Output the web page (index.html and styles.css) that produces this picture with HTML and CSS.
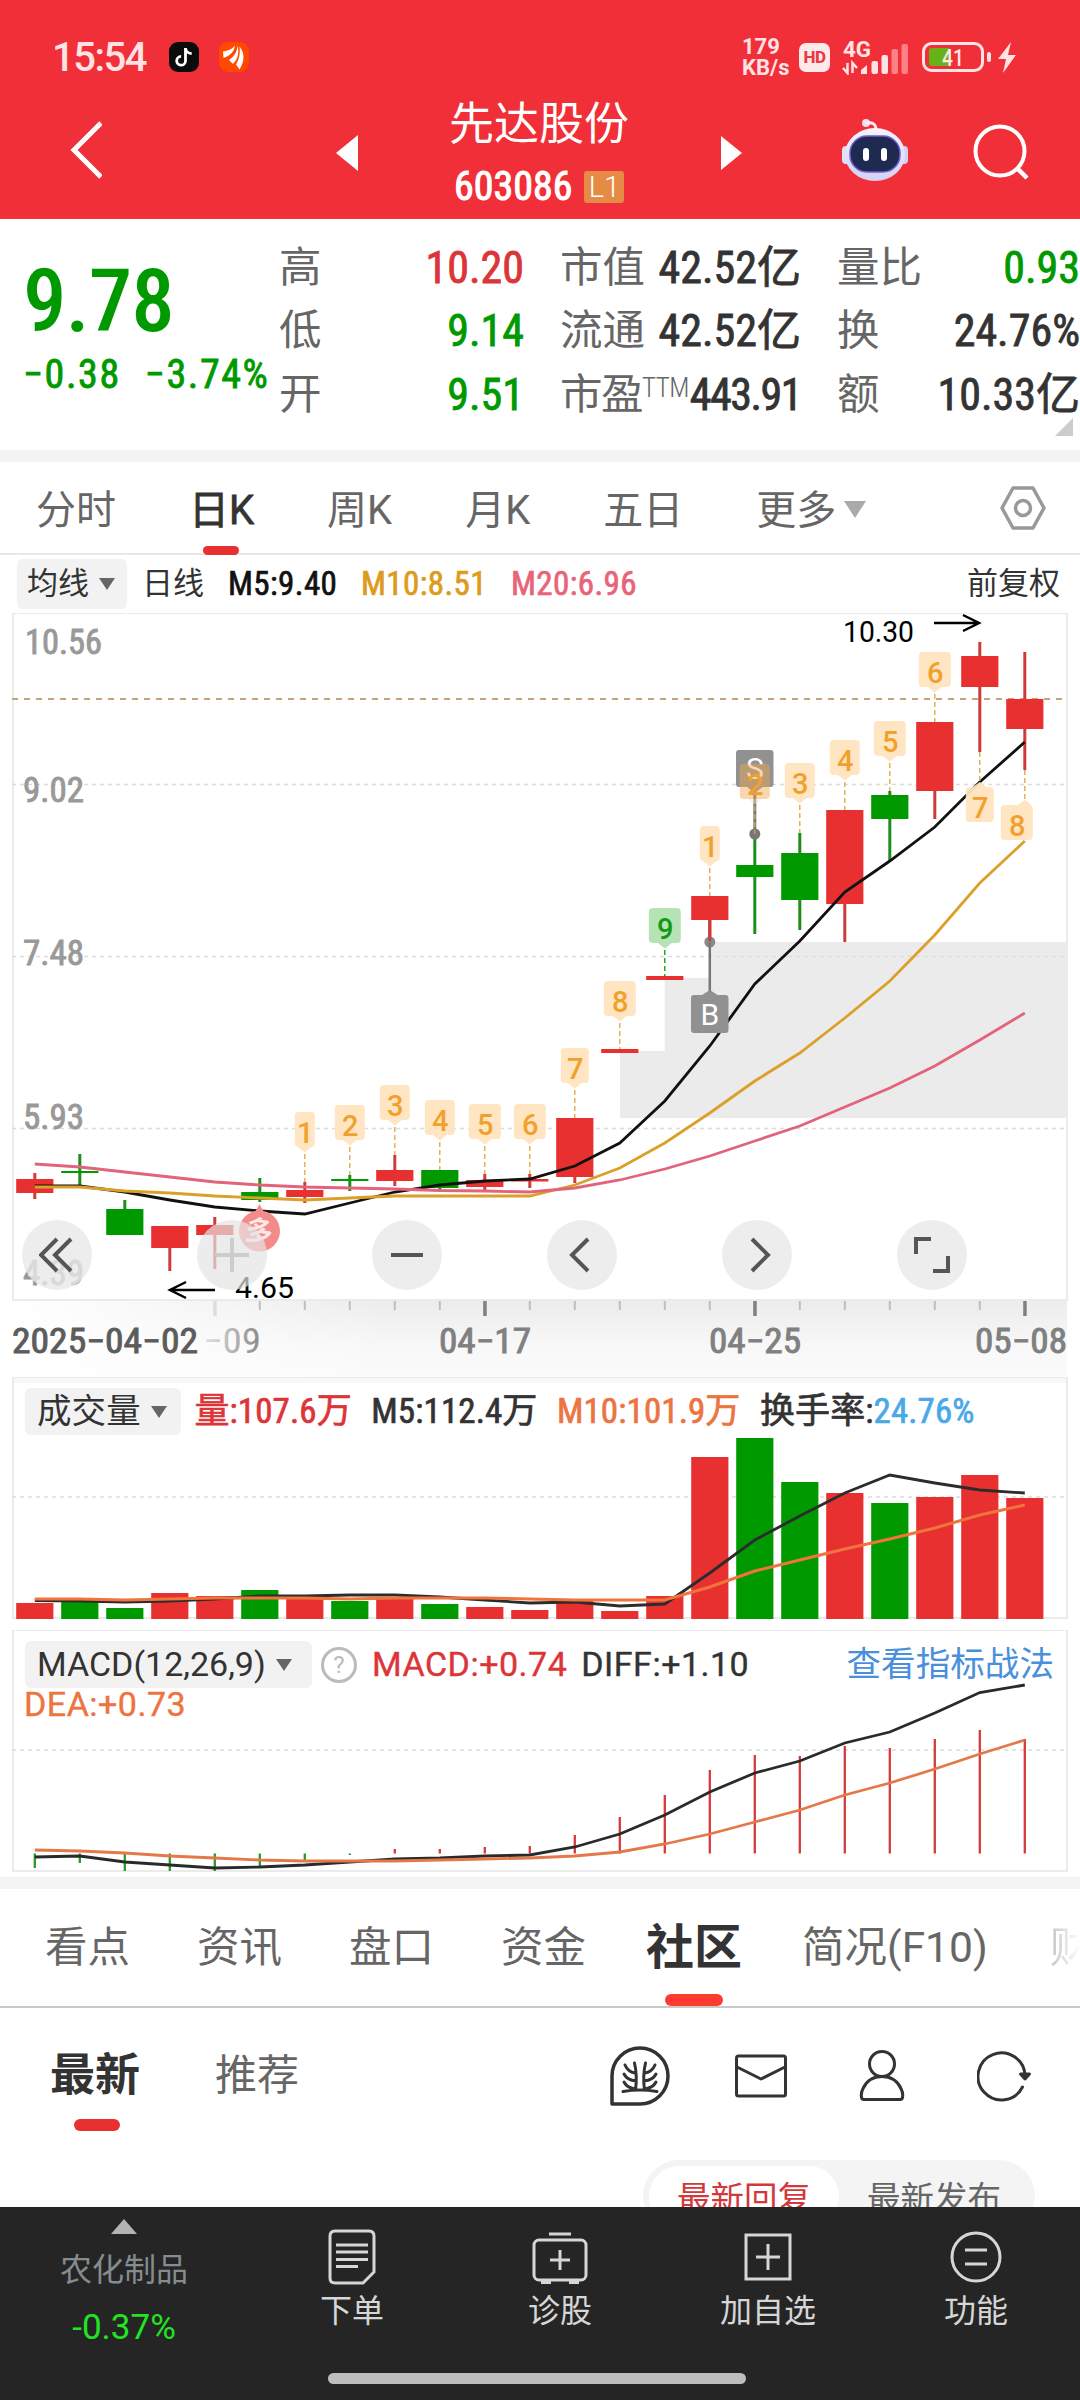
FILE: index.html
```html
<!DOCTYPE html>
<html lang="zh-CN">
<head>
    <meta charset="utf-8">
    <title>先达股份 603086</title>
    <link rel="stylesheet" href="styles.css">
</head>
<body>
    <header class="top">
        <div class="status">
            <span class="clock">15:54</span>
            <svg class="app-icon" width="30" height="30" viewBox="0 0 30 30">
                <rect width="30" height="30" rx="9" fill="#0b0b0b"/>
                <path d="M16.5 6v13a4.4 4.4 0 1 1-4.4-4.6" fill="none" stroke="#fff" stroke-width="2.8"/>
                <path d="M16.5 6c.3 3.6 2.5 5.4 6.2 5.6" fill="none" stroke="#fff" stroke-width="2.8"/>
            </svg>
            <svg class="app-icon" width="30" height="30" viewBox="0 0 30 30">
                <rect width="30" height="30" rx="9" fill="#ff4800"/>
                <path d="M4 9.500q8-1 12-6q-1 9-11.500 12.500z" fill="#fff"/>
                <path d="M10 18q8-5 8.500-14.500q3 11-4.500 18.500z" fill="#fff"/>
                <path d="M17 22.500q5-8 3.500-18q8 10 0 23z" fill="#fff"/>
            </svg>
            <div class="speed">179<br>KB/s</div>
            <div class="hd">HD</div>
            <svg class="signal" width="68" height="36" viewBox="842 38 68 36">
                <text x="843" y="56" font-size="22" font-weight="700" fill="#ffe3e4" textLength="28" lengthAdjust="spacingAndGlyphs">4G</text>
                <path d="M843 67l4.500 5V62M852.500 72V62l4.500 5" stroke="#ffe3e4" stroke-width="2.500" fill="none"/>
                <path d="M861 73v-4l6-5v9z" fill="#ffe3e4"/>
                <rect x="871.5" y="60" width="6.5" height="13" rx="2" fill="#ffe3e4"/>
                <rect x="881.5" y="54" width="6.5" height="19" rx="2" fill="#ffe3e4"/>
                <rect x="891.5" y="48" width="6.5" height="25" rx="2" fill="#ff8087"/>
                <rect x="901.5" y="43" width="6.5" height="30" rx="2" fill="#ff8087"/>
            </svg>
            <svg class="battery" width="98" height="34" viewBox="920 40 98 34">
                <rect x="923.5" y="43.5" width="59" height="27" rx="8" fill="none" stroke="#ffe3e4" stroke-width="3"/>
                <rect x="929" y="48" width="22" height="18" rx="3" fill="#67b317"/>
                <rect x="987" y="52" width="4" height="10" rx="2" fill="#ffe3e4"/>
                <text x="942" y="66" font-size="24" font-weight="500" fill="#ffe9ea" textLength="22" lengthAdjust="spacingAndGlyphs">41</text>
                <path d="M1011 42l-13 17h8l-3 14 13-18h-8l3-13z" fill="#ffe3e4"/>
            </svg>
        </div>
        <nav class="nav">
            <svg class="back" width="32" height="60" viewBox="0 0 32 60">
                <path d="M31 3L4 30L31 57" fill="none" stroke="#fff" stroke-width="5"/>
            </svg>
            <svg class="prev" width="22" height="36" viewBox="0 0 22 36"><path d="M22 0v36L0 18z" fill="#fff"/></svg>
            <div class="stock">
                <div class="stock-name">先达股份</div>
                <div class="stock-code">603086<span class="level">L1</span></div>
            </div>
            <svg class="next" width="21" height="34" viewBox="0 0 21 34"><path d="M0 0v34l21-17z" fill="#fff"/></svg>
            <svg class="robot" width="66" height="62" viewBox="0 0 66 62">
                <defs>
                    <linearGradient id="shell" x2="0" y2="1">
                        <stop offset="0" stop-color="#f8f4fb"/>
                        <stop offset="1" stop-color="#d3d0f4"/>
                    </linearGradient>
                </defs>
                <circle cx="24" cy="4" r="4" fill="#f3dfee"/>
                <path d="M24 4c7-1 10 1 10 7" fill="none" stroke="#ffe9f2" stroke-width="3"/>
                <rect x="0" y="27" width="9" height="18" rx="4" fill="#dfe0fb"/>
                <rect x="57" y="27" width="9" height="18" rx="4" fill="#cfd2f8"/>
                <ellipse cx="33" cy="35.5" rx="30" ry="26.5" fill="url(#shell)"/>
                <rect x="8" y="17" width="50" height="36" rx="17" fill="#1e2a50" stroke="#6f5fd0" stroke-width="1.5"/>
                <rect x="21" y="29" width="6" height="13" rx="3" fill="#fff"/>
                <rect x="39" y="29" width="6" height="13" rx="3" fill="#fff"/>
            </svg>
            <svg class="search" width="56" height="56" viewBox="0 0 56 56">
                <circle cx="27" cy="27" r="24.5" fill="none" stroke="#fff" stroke-width="4"/>
                <path d="M44 44l10 10" stroke="#fff" stroke-width="4.5"/>
            </svg>
        </nav>
    </header>

    <section class="quote">
        <div class="price">
            <div class="last">9.78</div>
            <div class="change"><span>−0.38</span><span>−3.74%</span></div>
        </div>
        <div class="stats">
            <div class="stat"><span>高</span><b class="up">10.20</b></div>
            <div class="stat"><span>市值</span><b>42.52亿</b></div>
            <div class="stat"><span>量比</span><b class="down">0.93</b></div>
            <div class="stat"><span>低</span><b class="down">9.14</b></div>
            <div class="stat"><span>流通</span><b>42.52亿</b></div>
            <div class="stat"><span>换</span><b>24.76%</b></div>
            <div class="stat"><span>开</span><b class="down">9.51</b></div>
            <div class="stat"><span class="tight">市盈<sup>TTM</sup></span><b class="tight">443.91</b></div>
            <div class="stat"><span>额</span><b>10.33亿</b></div>
        </div>
        <i class="corner"></i>
    </section>

    <div class="periods">
        <span>分时</span>
        <span class="active">日K</span>
        <span>周K</span>
        <span>月K</span>
        <span>五日</span>
        <span>更多<i class="caret light"></i></span>
        <svg class="gear" width="46" height="44" viewBox="0 0 46 44">
            <path d="M13 2h20l11 20-11 20H13L2 22z" fill="none" stroke="#999" stroke-width="3.5" stroke-linejoin="round"/>
            <circle cx="23" cy="22" r="7.5" fill="none" stroke="#999" stroke-width="3.5"/>
        </svg>
    </div>

    <div class="legend">
        <span class="pill">均线<i class="caret"></i></span>
        <span class="kind">日线</span>
        <span class="ma5">M5:9.40</span>
        <span class="ma10">M10:8.51</span>
        <span class="ma20">M20:6.96</span>
        <span class="adjust">前复权</span>
    </div>

    <section class="kline">
        <svg id="kline" width="1080" height="764" viewBox="0 613 1080 764"></svg>
        <div class="tools">
            <button class="tool"><svg width="36" height="38" viewBox="0 0 36 38"><path d="M18 3L2 19l16 16M32 3L16 19l16 16"/></svg></button>
            <button class="tool off"><svg width="36" height="38" viewBox="0 0 36 38"><path d="M18 2v34M1 19h34"/></svg></button>
            <button class="tool"><svg width="36" height="38" viewBox="0 0 36 38"><path d="M2 19h32"/></svg></button>
            <button class="tool"><svg width="36" height="38" viewBox="0 0 36 38"><path d="M24 3L8 19l16 16"/></svg></button>
            <button class="tool"><svg width="36" height="38" viewBox="0 0 36 38"><path d="M13 3l16 16-16 16"/></svg></button>
            <button class="tool"><svg width="36" height="38" viewBox="0 0 36 38"><path d="M2 18V3h15M34 20v15H19"/></svg></button>
        </div>
    </section>

    <section class="panel">
        <div class="panel-head volume-head">
            <span class="pill">成交量<i class="caret"></i></span>
            <span class="up">量:107.6万</span>
            <span>M5:112.4万</span>
            <span class="orange">M10:101.9万</span>
            <span>换手率:<em>24.76%</em></span>
        </div>
        <svg id="volume" width="1080" height="253" viewBox="0 1377 1080 253"></svg>
    </section>

    <section class="panel">
        <div class="panel-head macd-head">
            <span class="pill">MACD(12,26,9)<i class="caret"></i></span>
            <span class="help">?</span>
            <span class="up">MACD:+0.74</span>
            <span class="diff">DIFF:+1.10</span>
            <a class="guide">查看指标战法</a>
        </div>
        <div class="dea">DEA:+0.73</div>
        <svg id="macd" width="1080" height="247" viewBox="0 1630 1080 247"></svg>
    </section>

    <div class="tabs">
        <span>看点</span>
        <span>资讯</span>
        <span>盘口</span>
        <span>资金</span>
        <span class="active">社区</span>
        <span>简况(F10)</span>
        <span class="faded">财</span>
    </div>

    <section class="community">
        <div class="feed-tabs">
            <span class="active">最新</span>
            <span>推荐</span>
            <div class="feed-icons">
                <svg width="60" height="60" viewBox="0 0 60 60">
                    <path d="M2 58V30A28 28 0 1 1 30 58z" stroke-width="3.5"/>
                    <path d="M13 45.500q17-3 34 0M25.500 44q2-14-1-27M34.500 44q-2-14 1-27M25 27q-7-1-10-8M26 35q-9-1-12-7M26 43q-9-1-12-7M35 27q7-1 10-8M34 35q9-1 12-7M34 43q9-1 12-7"/>
                </svg>
                <svg width="52" height="44" viewBox="0 0 52 44">
                    <rect x="1.5" y="2" width="49" height="40" rx="2"/>
                    <path d="M2 13l24 12L50 13"/>
                </svg>
                <svg width="46" height="52" viewBox="0 0 46 52">
                    <circle cx="23" cy="14" r="12.5"/>
                    <path d="M5 49.500c-4 0-3-7-1-11C8 30 15 26.500 23 26.500S38 30 42 38.500c2 4 3 11-1 11z"/>
                </svg>
                <svg width="54" height="52" viewBox="0 0 54 52">
                    <path d="M48 26A23.500 23.500 0 1 0 45.500 37"/>
                    <path d="M43.500 24h9L48 29z" class="solid"/>
                </svg>
            </div>
        </div>
        <div class="sort">
            <span class="chosen">最新回复</span>
            <span>最新发布</span>
        </div>
    </section>

    <footer class="bottom">
        <div class="sector">
            <i class="caret-up"></i>
            <span>农化制品</span>
            <b>-0.37%</b>
        </div>
        <div class="action">
            <svg width="48" height="56" viewBox="0 0 48 56">
                <path d="M7 2h34q5 0 5 5v36L35 54H7q-5 0-5-5V7q0-5 5-5zM8 16h32M8 23h32M8 30.500h32M8 37.500h22"/>
            </svg>
            <span>下单</span>
        </div>
        <div class="action">
            <svg width="56" height="56" viewBox="0 0 56 56">
                <rect x="2" y="11" width="52" height="40" rx="5"/>
                <path d="M17 5h22M28 21v20M18 31h20M9 53.500h10M37 53.500h10"/>
            </svg>
            <span>诊股</span>
        </div>
        <div class="action">
            <svg width="48" height="56" viewBox="0 0 48 56">
                <rect x="2" y="6" width="44" height="44"/>
                <path d="M24 15v26M12 28h24"/>
            </svg>
            <span>加自选</span>
        </div>
        <div class="action">
            <svg width="52" height="56" viewBox="0 0 52 56">
                <circle cx="26" cy="28" r="24"/>
                <path d="M15 21h22M15 35h22"/>
            </svg>
            <span>功能</span>
        </div>
        <i class="home"></i>
    </footer>

    <script src="charts.js"></script>
</body>
</html>
```
FILE: styles.css
```css
body {
    margin: 0;
    width: 1080px;
    height: 2400px;
    overflow: hidden;
    position: relative;
    background: #fff;
    color: #333;
    font-family: "Roboto", "Noto Sans CJK SC", sans-serif;
}

i, em {
    font-style: normal;
}

.up { color: #dc3538 !important; }
.down { color: #090 !important; }
.orange { color: #ec7440; }

/* header */
.top {
    height: 219px;
    background: #f12f38;
    color: #fff;
}

.status {
    display: flex;
    align-items: center;
    height: 90px;
    padding: 24px 62px 0 52px;
    box-sizing: border-box;
}

.clock {
    width: 96px;
    font-size: 40px;
    font-weight: 500;
    letter-spacing: -1.5px;
    white-space: nowrap;
    color: #ffe3e4;
}

.app-icon {
    margin-left: 21px;
}

.app-icon + .app-icon {
    margin-left: 20px;
}

.speed {
    margin-left: auto;
    width: 50px;
    font-size: 22px;
    font-weight: 700;
    line-height: 21px;
    color: #ffe3e4;
}

.hd {
    width: 31px;
    height: 29px;
    margin: 0 12px 0 7px;
    border-radius: 7px;
    background: #ffe9ea;
    color: #e83a42;
    font-size: 17px;
    font-weight: 800;
    line-height: 29px;
    letter-spacing: -0.5px;
    text-align: center;
}

.battery {
    margin-left: 10px;
}

.nav {
    display: flex;
    align-items: center;
    height: 120px;
    padding-left: 70px;
}

.prev { margin: 6px 91px 0 234px; }
.next { margin: 6px 100px 0 92px; }
.search { margin: 4px 0 0 65px; }

.stock {
    width: 180px;
    padding-top: 3px;
}

.stock-name {
    font-size: 45px;
    line-height: 50px;
    white-space: nowrap;
}

.stock-code {
    display: flex;
    align-items: center;
    margin-top: 20px;
    padding-left: 5px;
    font: 400 40px/34px "Roboto Condensed", Roboto, sans-serif;
    -webkit-text-stroke: 1px currentColor;
}

.level {
    width: 40px;
    height: 32px;
    margin-left: 12px;
    border-radius: 3px;
    background: #e58b45;
    font: 300 29px/33px Roboto, sans-serif;
    text-align: center;
    -webkit-text-stroke: 0;
}

/* quote */
.quote {
    display: flex;
    position: relative;
    height: 231px;
    border-bottom: 12px solid #f4f4f4;
}

.price {
    width: 256px;
    padding: 38px 0 0 23px;
    color: #090;
    font-family: "Roboto Condensed", Roboto, sans-serif;
    white-space: nowrap;
}

.last {
    font-size: 87px;
    font-weight: 540;
    line-height: 88px;
    letter-spacing: -1px;
}

.change {
    display: flex;
    gap: 24px;
    margin-top: 8px;
    font-size: 40px;
    line-height: 44px;
    letter-spacing: 1.6px;
    -webkit-text-stroke: 0.8px currentColor;
}

.stats {
    display: grid;
    grid-template-columns: 245px 241px 243px;
    grid-template-rows: repeat(3, 63.5px);
    column-gap: 36px;
    height: 190px;
    padding-top: 17px;
}

.stat {
    display: flex;
    justify-content: space-between;
    align-items: center;
    font-size: 42.5px;
    line-height: 60px;
    color: #666;
    white-space: nowrap;
}

.stat sup {
    font: 300 27px/1 "Roboto Condensed", Roboto, sans-serif;
    letter-spacing: -0.5px;
    vertical-align: 12px;
}

.stat b {
    color: #333;
    font: 400 44px/60px "Roboto Condensed", "Noto Sans CJK SC", sans-serif;
    -webkit-text-stroke: 0.8px currentColor;
}

.stat .tight {
    letter-spacing: -1.5px;
}

.corner {
    position: absolute;
    right: 7px;
    bottom: 14px;
    border: 9px solid;
    border-color: transparent #ccc #ccc transparent;
}

/* period tabs */
.periods {
    display: flex;
    align-items: center;
    gap: 73px;
    height: 93px;
    padding: 0 34px 2px 36px;
    border-bottom: 2px solid #e8e8e8;
    font-size: 40px;
    color: #666;
    box-sizing: border-box;
}

.periods span,
.tabs span,
.feed-tabs span {
    position: relative;
    white-space: nowrap;
}

.periods .active {
    color: #333;
    -webkit-text-stroke: 0.8px currentColor;
}

.active::after {
    content: "";
    position: absolute;
    left: 50%;
    bottom: -19px;
    width: 36px;
    height: 9px;
    margin-left: -19px;
    border-radius: 5px;
    background: #e83030;
}

.gear {
    margin: 2px 0 0 auto;
}

.caret {
    display: inline-block;
    margin-left: 10px;
    border: 8px solid transparent;
    border-top: 12px solid #666;
    border-bottom: 0;
    vertical-align: 5px;
}

.caret.light {
    margin-left: 8px;
    border-width: 17px 11px 0;
    border-top-color: #aaa;
    vertical-align: 6px;
}

.pill {
    display: flex;
    align-items: center;
    border-radius: 6px;
    background: #f2f2f2;
    box-sizing: border-box;
    color: #333;
    white-space: nowrap;
}

/* moving average legend */
.legend {
    display: flex;
    align-items: center;
    height: 58px;
    padding: 0 20px 0 17px;
    font: 31px/50px "Roboto Condensed", "Noto Sans CJK SC", sans-serif;
    white-space: nowrap;
    box-sizing: border-box;
}

.legend .pill {
    width: 110px;
    height: 50px;
    padding-left: 10px;
}

.legend .kind { margin-left: 15px; width: 86px; }
.ma5 { width: 133px; color: #111; }
.ma10 { width: 150px; color: #dd9b1c; }
.ma20 { color: #e8647a; }

.ma5, .ma10, .ma20 {
    font-size: 33px;
    letter-spacing: 0.4px;
    -webkit-text-stroke: 0.7px currentColor;
}

.adjust { margin-left: auto; }

/* k-line */
.kline {
    position: relative;
    height: 764px;
}

.kline svg,
.panel svg {
    display: block;
}

.tools {
    position: absolute;
    left: 22px;
    top: 607px;
    display: flex;
    gap: 105px;
}

.tool {
    display: flex;
    justify-content: center;
    align-items: center;
    width: 70px;
    height: 70px;
    padding: 0;
    border: 0;
    border-radius: 50%;
    background: rgba(232, 232, 232, .8);
}

.tool path {
    fill: none;
    stroke: #555;
    stroke-width: 4;
}

.tool.off {
    background: rgba(228, 228, 228, .7);
}

.tool.off path {
    stroke: #ccc;
}

.date-axis text,
.price-axis text {
    font: 400 35px "Roboto Condensed", Roboto, sans-serif;
    fill: #999;
    stroke: #999;
    stroke-width: 0.9;
}

.date-axis text {
    fill: #808080;
    stroke: #808080;
}

.date-axis .first {
    fill: #5c5c5c;
    stroke: #5c5c5c;
}

.date-axis .fading {
    fill: url(#fade);
    stroke: none;
}

.tag text {
    font: 500 29px Roboto, sans-serif;
    text-anchor: middle;
}

.mark text {
    font: 400 30px Roboto, sans-serif;
    fill: #fff;
    text-anchor: middle;
}

.extreme {
    font: 400 30px Roboto, sans-serif;
    fill: #000;
}

/* indicator panels */
.panel {
    position: relative;
}

.panel-head {
    position: absolute;
    left: 25px;
    right: 26px;
    top: 11px;
    display: flex;
    align-items: center;
    height: 47px;
    font-size: 34px;
    line-height: 47px;
    white-space: nowrap;
}

.panel-head .pill {
    height: 47px;
    padding-left: 12px;
    -webkit-text-stroke: 0;
}

.volume-head {
    font-family: "Roboto Condensed", "Noto Sans CJK SC", sans-serif;
    font-size: 35px;
    letter-spacing: 0.1px;
    gap: 19.5px;
    -webkit-text-stroke: 0.7px currentColor;
}

.volume-head .pill {
    width: 156px;
    margin-right: -6px;
    font-size: 34.5px;
}

.volume-head em {
    color: #4aa8e8;
}

.macd-head .pill {
    width: 287px;
}

.help {
    width: 30px;
    height: 30px;
    margin: 0 15px 0 9px;
    border: 3px solid #bbb;
    border-radius: 50%;
    color: #bbb;
    font-size: 24px;
    line-height: 31px;
    text-align: center;
}

.macd-head .up,
.macd-head .diff,
.dea {
    letter-spacing: 0.5px;
    -webkit-text-stroke: 0.4px currentColor;
}

.diff { margin-left: 14px; }

.guide {
    margin-left: auto;
    font-size: 34.6px;
    color: #4a8fdc;
}

.dea {
    position: absolute;
    left: 24px;
    top: 52px;
    font-size: 34px;
    line-height: 44px;
    color: #ec7440;
}

/* section tabs */
.tabs {
    display: flex;
    align-items: center;
    gap: 67px;
    height: 131px;
    padding-left: 45px;
    border-top: 12px solid #f4f4f4;
    border-bottom: 2px solid #c9c9c9;
    box-sizing: border-box;
    overflow: hidden;
    font-size: 42.5px;
    line-height: 60px;
    color: #666;
}

.tabs .active {
    margin: 0 -7px;
    font-size: 48px;
    font-weight: 700;
    color: #333;
}

.tabs .active::after {
    bottom: -28px;
    width: 58px;
    height: 12px;
    margin-left: -29px;
    border-radius: 6px;
    background: #ff3b30;
}

.tabs .faded {
    margin-left: -5px;
    background: linear-gradient(90deg, #c4c4c4, #fff 30px);
    background-clip: text;
    color: transparent;
}

/* community */
.community {
    height: 199px;
    overflow: hidden;
}

.feed-tabs {
    display: flex;
    align-items: center;
    height: 136px;
    padding: 0 49px 0 50px;
    font-size: 42px;
    line-height: 60px;
    color: #666;
}

.feed-tabs .active {
    margin-right: 75px;
    font-size: 45px;
    font-weight: 700;
    color: #333;
}

.feed-tabs .active::after {
    bottom: -25px;
    width: 46px;
    height: 12px;
    margin-left: -21px;
    border-radius: 6px;
}

.feed-icons {
    display: flex;
    align-items: center;
    gap: 72px;
    margin-left: auto;
}

.feed-icons svg:first-child {
    margin-right: -7px;
}

.feed-icons svg {
    fill: none;
    stroke: #333;
    stroke-width: 3;
    stroke-linejoin: round;
    stroke-linecap: round;
}

.feed-icons .solid {
    fill: #333;
}

.sort {
    display: flex;
    width: 392px;
    height: 72px;
    margin: 16px 0 0 643px;
    padding: 6px;
    border-radius: 42px;
    background: #f4f4f4;
    box-sizing: border-box;
    font-size: 33.5px;
    line-height: 66px;
    color: #666;
}

.sort span {
    width: 190px;
    text-align: center;
}

.sort .chosen {
    border-radius: 36px;
    background: #fff;
    color: #d3383a;
}

/* bottom bar */
.bottom {
    position: relative;
    display: flex;
    height: 193px;
    background: #252525;
    color: #d6d6d6;
}

.sector {
    display: flex;
    flex-direction: column;
    align-items: center;
    width: 248px;
    font-size: 32px;
    color: #858c90;
}

.sector span {
    margin-top: 12px;
    line-height: 48px;
}

.sector b {
    margin-top: 12px;
    font-size: 35px;
    font-weight: 400;
    line-height: 44px;
    color: #22e422;
}

.caret-up {
    margin-top: 12px;
    border: 13px solid transparent;
    border-top: 0;
    border-bottom: 15px solid #b4b4b4;
}

.action {
    display: flex;
    flex-direction: column;
    align-items: center;
    width: 208px;
    padding-top: 22px;
    font-size: 32px;
    line-height: 52px;
}

.action svg {
    fill: none;
    stroke: #d6d6d6;
    stroke-width: 3;
}

.home {
    position: absolute;
    left: 328px;
    bottom: 16px;
    width: 418px;
    height: 11px;
    border-radius: 6px;
    background: #bdbdbd;
}
```
FILE: charts.js
```js
const RED = '#e83030';
const GREEN = '#090';
const FRAME = '#ebebeb';

const x = i => 34.8 + i * 45;

// color, body top, body bottom, high, low
const candles = [
    ['r', 1179, 1193, 1173, 1199],
    ['g', 1171, 1173, 1154, 1185],
    ['g', 1209, 1235, 1200, 1235],
    ['r', 1226, 1248, 1226, 1271],
    ['r', 1225, 1235, 1217, 1269],
    ['g', 1192, 1200, 1178, 1202],
    ['r', 1190, 1197, 1182, 1203],
    ['g', 1179, 1181, 1175, 1191],
    ['r', 1170, 1181, 1155, 1186],
    ['g', 1170, 1188, 1170, 1190],
    ['r', 1180, 1187, 1174, 1190],
    ['r', 1179, 1181.5, 1174, 1188],
    ['r', 1118, 1177, 1118, 1183],
    ['r', 1049, 1053, 1049, 1053],
    ['r', 976, 980, 976, 980],
    ['r', 896, 920, 896, 942],
    ['g', 865, 877, 834, 934],
    ['g', 853, 900, 833, 930],
    ['r', 810, 904, 810, 942],
    ['g', 795, 819, 791, 861],
    ['r', 722, 791, 722, 819],
    ['r', 656, 687, 642, 752],
    ['r', 699, 729, 652, 770]
];

const ma5 = [1186, 1186, 1192, 1200, 1207, 1211, 1214, 1203, 1192, 1185, 1181, 1179, 1166, 1143, 1101, 1046, 984, 941, 892, 861, 827, 782, 742];
const ma10 = [1187, 1187, 1191, 1193, 1196, 1198, 1200, 1198, 1196, 1196, 1196, 1196, 1185, 1168, 1143, 1113, 1081, 1053, 1018, 981, 935, 883, 841];
const ma20 = [1164, 1167, 1172, 1177, 1182, 1185, 1187, 1188, 1189, 1190.5, 1191, 1192, 1188, 1180, 1169, 1156, 1141, 1126, 1107, 1088, 1066, 1040, 1013];

// candle index, label, box top, width
const tags = [
    [6, '1', 1112, 20], [7, '2', 1105, 30], [8, '3', 1085, 30], [9, '4', 1100, 30],
    [10, '5', 1104, 32], [11, '6', 1104, 32], [12, '7', 1048, 28], [13, '8', 981, 32],
    [14, '9', 908, 32], [15, '1', 826, 20], [16, '2', 764, 30], [17, '3', 763, 30],
    [18, '4', 740, 30], [19, '5', 721, 32], [20, '6', 652, 32]
];

const volumes = [1603, 1602, 1608, 1593, 1596, 1590, 1598, 1601, 1597, 1604, 1607, 1610, 1600, 1611, 1596, 1457, 1438, 1482, 1493, 1503, 1497, 1475, 1498];
const vol5 = [1600.5, 1601, 1602, 1601, 1599, 1596, 1596, 1595, 1595, 1597, 1600, 1603, 1602, 1606, 1604, 1573, 1540, 1516, 1493, 1475, 1483, 1490, 1493];
const vol10 = [1599, 1599, 1600, 1599, 1598, 1598, 1598, 1599, 1598, 1598, 1598, 1599, 1600, 1600, 1600, 1587, 1571, 1560, 1549, 1539, 1528, 1515, 1505];

const macd = [1868, 1863, 1871, 1871, 1871, 1866, 1860, 1855, 1849, 1849, 1847, 1846, 1835, 1817, 1795, 1770, 1755, 1756, 1746, 1748, 1739, 1730, 1739];
const diff = [1857, 1856, 1862, 1865, 1868, 1867, 1865, 1862, 1859, 1858, 1856, 1855, 1847, 1834, 1815, 1792, 1773, 1761, 1743, 1732, 1713, 1692.5, 1685];
const dea = [1850, 1851, 1853, 1856, 1858, 1860, 1861, 1861, 1861, 1860, 1859, 1858, 1856, 1852, 1844, 1834, 1822, 1810, 1795, 1783, 1769, 1754, 1740];

function rect(x, y, w, h, fill, extra = '') {
    return `<rect x="${x}" y="${y}" width="${w}" height="${h}" fill="${fill}" ${extra}/>`;
}

function line(x1, y1, x2, y2, stroke, width, extra = '') {
    return `<line x1="${x1}" y1="${y1}" x2="${x2}" y2="${y2}" stroke="${stroke}" stroke-width="${width}" ${extra}/>`;
}

function curve(values, stroke, width = 2.8) {
    const points = values.map((y, i) => `${x(i)},${y}`).join(' ');
    return `<polyline points="${points}" fill="none" stroke="${stroke}" stroke-width="${width}"/>`;
}

function text(x, y, width, content, cls = '') {
    return `<text x="${x}" y="${y}" textLength="${width}" lengthAdjust="spacingAndGlyphs" class="${cls}">${content}</text>`;
}

function frame(top, bottom) {
    return `<rect x="13" y="${top + 1}" width="1054" height="${bottom - top - 2}" fill="none" stroke="${FRAME}" stroke-width="2"/>`;
}

function grid(y) {
    return line(12, y, 1067, y, '#dcdcdc', 1.3, 'stroke-dasharray="4 4"');
}

function dash(i, y1, y2, color = '#e0a53a') {
    return line(x(i), y1, x(i), y2, color, 1.3, 'stroke-dasharray="5 3"');
}

function tag(i, label, top, w, below = false, shift = 0) {
    const green = label === '9';
    const edge = below ? top : top + 35;
    const tip = below ? top - 5 : top + 40.5;
    const bg = green ? '#b3e2b3' : '#ffe4bf';
    const cx = x(i) + shift;
    return `<g class="tag"><g opacity="${i === 16 ? .45 : .95}">
        ${rect(cx - w / 2, top, w, 35, i === 16 ? '#f0a850' : bg, 'rx="4"')}
        <path d="M${x(i) - 7} ${edge}L${x(i)} ${tip}L${x(i) + 7} ${edge}z" fill="${bg}"/></g>
        <text x="${cx + .5}" y="${top + 31}" fill="${green ? '#129a12' : '#f2a02c'}">${label}</text></g>`;
}

function drawKline() {
    let s = '<defs>' +
        '<linearGradient id="down" x2="0" y2="1"><stop offset="0" stop-color="#ececec"/><stop offset=".6" stop-color="#f8f8f8"/><stop offset="1" stop-color="#fbfbfb"/></linearGradient>' +
        '<linearGradient id="side"><stop offset="0" stop-color="#fff"/><stop offset="1" stop-color="#fff" stop-opacity="0"/></linearGradient>' +
        '<linearGradient id="fade"><stop offset="0" stop-color="#e4e4e4"/><stop offset="1" stop-color="#8a8a8a"/></linearGradient></defs>';

    s += rect(12, 1301, 1055, 76, 'url(#down)') + rect(12, 1301, 380, 76, 'url(#side)');

    // price gap zone
    s += rect(664.7, 978, 45, 73, '#ebebeb') + rect(709.7, 942, 357.3, 109, '#ebebeb') + rect(620, 1051, 447, 67, '#ebebeb');

    s += frame(612, 1301);
    s += grid(784.5) + grid(956.5) + grid(1128.5);

    s += '<g class="price-axis">' +
        text(25, 654, 77, '10.56') + text(23, 802, 61, '9.02') + text(23, 965, 61, '7.48') +
        text(23, 1129, 61, '5.93') + text(23, 1285, 61, '4.39') + '</g>';

    s += line(12, 699, 1067, 699, '#c3a578', 2, 'stroke-dasharray="6 6"');

    candles.forEach(([c, top, bottom, high, low], i) => {
        const red = c === 'r';
        s += line(x(i), high, x(i), low, red ? '#cf3a3a' : '#1a8f1a', 3);
        s += rect(x(i) - 18.6, top, 37.2, bottom - top, red ? RED : GREEN);
    });

    s += curve(ma5, '#111') + curve(ma10, '#dba02a') + curve(ma20, '#e2637a');

    // sell and buy marks
    s += `<g class="mark">${line(754.8, 790, 754.8, 834, '#777', 3)}<circle cx="754.8" cy="834" r="5.5" fill="#777"/>` +
        `${rect(736, 750, 37.5, 37, '#919191', 'rx="3"')}<path d="M747 787l7.8 6 7.8-6z" fill="#919191"/><text x="754.8" y="779">S</text>` +
        `<circle cx="709.8" cy="942" r="5.5" fill="#8a8a8a"/>${line(709.8, 942, 709.8, 992, '#777', 2.5)}` +
        `${rect(691, 995, 37.5, 38, '#919191', 'rx="3"')}<path d="M702 995l7.8-5 7.8 5z" fill="#919191"/><text x="709.8" y="1025">B</text></g>`;
    s += line(709.8, 920, 709.8, 941, '#cf3a3a', 3);

    tags.forEach(([i, label, top, w]) => {
        const end = Math.max(top + 68, candles[i][3]);
        s += dash(i, top + 42, end, label === '9' ? GREEN : undefined) + tag(i, label, top, w);
    });
    s += dash(21, 752, 783) + tag(21, '7', 787, 28, true);
    s += dash(22, 770, 801) + tag(22, '8', 805, 32, true, -8);

    // long signal
    s += '<path d="M254 1214l5.5-10 5.5 10z" fill="#f48b8b"/><circle cx="259.5" cy="1231" r="20.5" fill="#f48b8b"/>' +
        '<text x="245" y="1241" font-size="28" fill="#fff" font-weight="700" opacity=".8" transform="rotate(8 259 1231)">多</text>';

    // highest and lowest
    s += text(843, 642, 71, '10.30', 'extreme') + '<path d="M934 623h45M963 615l16 8-16 8" fill="none" stroke="#000" stroke-width="2.5"/>';
    s += text(235, 1298, 59, '4.65', 'extreme') + '<path d="M215 1290h-45M186 1282l-16 8 16 8" fill="none" stroke="#000" stroke-width="2.5"/>';

    for (let i = 4; i < 23; i++) {
        const major = i % 6 === 4;
        s += rect(x(i) - (major ? 1.6 : 1), 1301, major ? 3.5 : 2, major ? 15 : 9, i === 4 ? '#ddd' : major ? '#808080' : '#bfbfbf');
    }

    s += '<g class="date-axis">' + text(12, 1353, 186, '2025−04−02', 'first') + text(203, 1353, 58, '−09', 'fading') +
        text(439, 1353, 92, '04−17') + text(709, 1353, 92, '04−25') + text(975, 1353, 92, '05−08') + '</g>';

    document.getElementById('kline').innerHTML = s;
}

function drawVolume() {
    let s = rect(12, 1377, 1055, 6, '#f8f8f8') + frame(1376, 1619) + grid(1497);
    volumes.forEach((top, i) => {
        const green = [1, 2, 5, 7, 9, 16, 17, 19].includes(i);
        s += rect(x(i) - 18.6, top, 37.2, 1619 - top, green ? GREEN : RED);
    });
    s += curve(vol5, '#2c2c2c') + curve(vol10, '#f0743c', 3);
    document.getElementById('volume').innerHTML = s;
}

function drawMacd() {
    let s = frame(1629, 1872) + grid(1750);
    macd.forEach((y, i) => {
        s += line(x(i), 1853.5, x(i), y, y < 1853 ? '#d43a3a' : '#2a9a2a', 2.3);
    });
    s += curve(diff, '#2a2a2a') + curve(dea, '#e57848');
    document.getElementById('macd').innerHTML = s;
}

drawKline();
drawVolume();
drawMacd();
```
